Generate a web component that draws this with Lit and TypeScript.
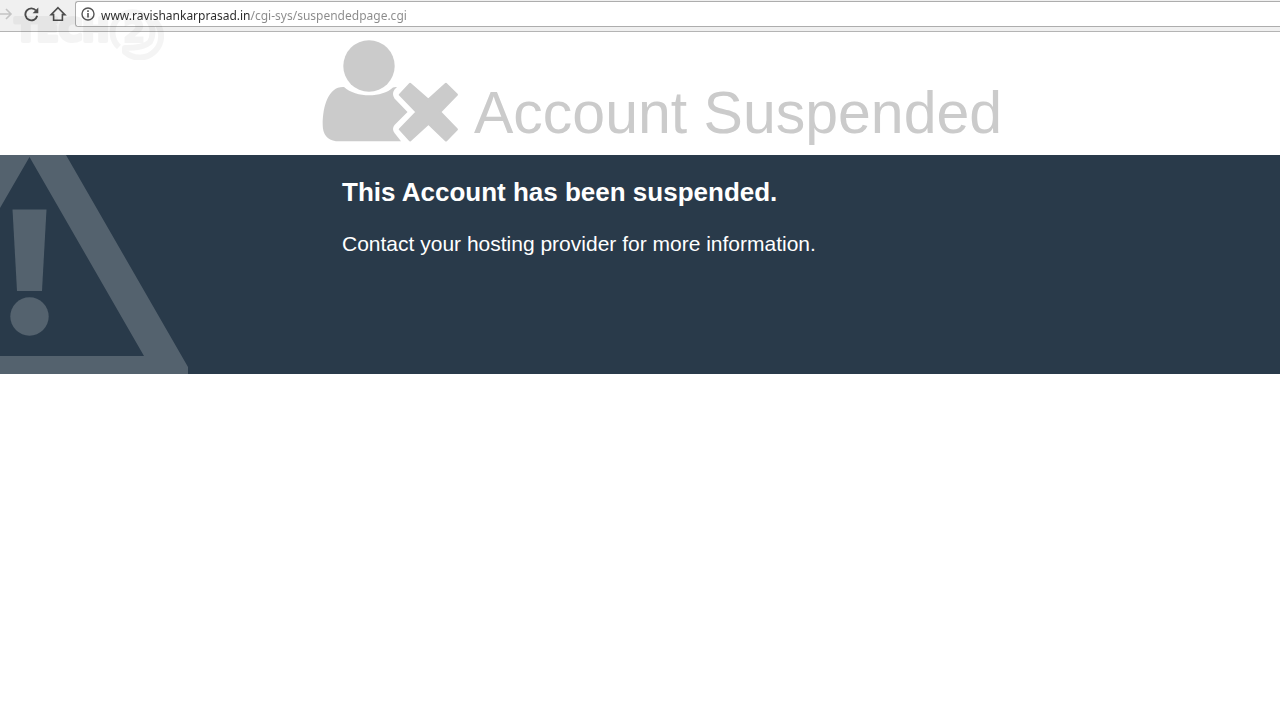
import { LitElement, html, css } from "lit";
import { customElement } from "lit/decorators.js";

@customElement("browser-bar")
class BrowserBar extends LitElement {
  static styles = css`
    :host {
      display: block;
    }
    .bar {
      display: flex;
      align-items: center;
      height: 32px;
      box-sizing: border-box;
      padding: 1px 0 4px;
      background: #f0f0f0;
      border-bottom: 1px solid #b4b4b4;
    }
    button {
      display: flex;
      padding: 0;
      border: 0;
      background: none;
      color: #4c4c4c;
    }
    svg {
      display: block;
    }
    .nav {
      display: flex;
      align-items: center;
      gap: 10px;
      flex: none;
      margin-right: 8px;
    }
    .forward {
      color: #c4c4c4;
      margin-left: -3px;
    }
    .address {
      flex: 1;
      display: flex;
      align-items: center;
      gap: 6px;
      height: 26px;
      box-sizing: border-box;
      padding-left: 5px;
      background: #fff;
      border: 1px solid #adadad;
      border-right: 0;
      border-radius: 3px 0 0 3px;
    }
    .info {
      color: #555;
    }
    input {
      flex: 1;
      min-width: 0;
      height: 22px;
      padding: 2px 0 0;
      box-sizing: border-box;
      border: 0;
      outline: 0;
      color: #2b2b2b;
      font: 12px/20px "Noto Sans", "Open Sans", sans-serif;
      background: linear-gradient(90deg, #2b2b2b 150px, #8a8a8a 150px);
      -webkit-background-clip: text;
      background-clip: text;
      -webkit-text-fill-color: transparent;
    }
  `;

  render() {
    return html`
      <div class="bar">
        <div class="nav">
          <button class="forward" aria-label="Forward">
            <svg width="16" height="16" viewBox="0 0 16 16" fill="none" stroke="currentColor" stroke-width="1.600">
              <path d="M0 8H14M9 3L14 8L9 13" />
            </svg>
          </button>
          <button aria-label="Reload">
            <svg width="16" height="16" viewBox="0 0 16 16">
              <path d="M13 4.500A6 6 0 1 0 14.200 9.800" fill="none" stroke="currentColor" stroke-width="1.900" />
              <path d="M15.300 1.500V7.200H9.600Z" fill="currentColor" />
            </svg>
          </button>
          <button aria-label="Home">
            <svg width="18" height="16" viewBox="0 0 18 16" fill="none" stroke="currentColor" stroke-width="1.600">
              <path d="M9 1.700L15.900 8.600H13.400V14.300H4.600V8.600H2.100Z" />
            </svg>
          </button>
        </div>
        <div class="address">
          <button class="info" aria-label="Site information">
            <svg width="14" height="14" viewBox="0 0 14 14">
              <circle cx="7" cy="7" r="6" fill="none" stroke="currentColor" stroke-width="1.400" />
              <path d="M6.200 6H7.800V10.600H6.200ZM6.200 3.300H7.800V4.900H6.200Z" fill="currentColor" />
            </svg>
          </button>
          <input aria-label="Address" value="www.ravishankarprasad.in/cgi-sys/suspendedpage.cgi" spellcheck="false" />
        </div>
      </div>
    `;
  }
}

@customElement("app-root")
class AppRoot extends LitElement {
  static styles = css`
    :host {
      display: block;
      position: relative;
      min-height: 100vh;
      background: #fff;
      font-family: "Liberation Sans", Arial, sans-serif;
    }
    .watermark {
      position: absolute;
      top: 6px;
      left: 12px;
      pointer-events: none;
      opacity: 0.04;
    }
    .watermark text {
      font: bold 32px "DejaVu Sans", sans-serif;
    }
    header {
      display: flex;
      align-items: flex-end;
      gap: 16px;
      padding: 7px 16px 12px 25%;
      color: #cbcbcb;
    }
    .user {
      flex: none;
      margin-left: 2px;
    }
    h1 {
      margin: 0;
      font-size: 59px;
      line-height: 60px;
      font-weight: 400;
    }
    .panel {
      position: relative;
      overflow: hidden;
      box-sizing: border-box;
      min-height: 219px;
      padding: 20px 16px 20px 25%;
      background: #293a4a;
      color: #fff;
    }
    .warning {
      position: absolute;
      top: 0;
      left: 0;
    }
    .message {
      padding-left: 22px;
    }
    h2 {
      margin: 0 0 20px;
      font-size: 26px;
      line-height: 34px;
    }
    p {
      margin: 0;
      font-size: 21px;
      line-height: 30px;
    }
  `;

  render() {
    return html`
      <browser-bar></browser-bar>
      <header>
        <svg class="user" width="136" height="104" viewBox="0 0 136 104" fill="currentColor" aria-hidden="true">
          <circle cx="47" cy="27" r="25.700" />
          <path d="M22 48C34 59 60 59 71 48.500Q73 47.800 75 48L72.500 50.500Q69.500 55 72.500 59.500L85.500 73L72.500 86Q69.500 90 72.500 94L79 102.300H14Q.7 100 .7 86C.7 66 7 47 22 48Z" />
          <path
            d="M88 45L106.300 61L124 45L134.700 55.700L118 73L134.700 90.300L124 101.300L106.300 84.500L88 101.300L78 90.300L94.700 73L78 55.700Z"
            stroke="currentColor"
            stroke-width="2.400"
            stroke-linejoin="round"
          />
        </svg>
        <h1>Account Suspended</h1>
      </header>
      <section class="panel">
        <svg class="warning" width="188" height="219" viewBox="0 0 188 219" fill="#54626e" aria-hidden="true">
          <path d="M0 0H66L188 212V219H0V201H144L29.500 2L0 53Z" />
          <path d="M12.500 54.500H46.500L42 136H17Z" />
          <circle cx="29.500" cy="161.500" r="19.200" />
        </svg>
        <div class="message">
          <h2>This Account has been suspended.</h2>
          <p>Contact your hosting provider for more information.</p>
        </div>
      </section>
      <svg class="watermark" width="152" height="54" viewBox="0 0 152 54" aria-hidden="true">
        <text x="3" y="35" stroke="#000" stroke-width="4" stroke-linejoin="round">TECH</text>
        <path
          d="M107 41A20 20 0 1 1 138 36Q132 42 113 42V46A21 21 0 0 0 142 14"
          fill="none"
          stroke="#000"
          stroke-width="6"
          stroke-linejoin="round"
        />
        <text x="111" y="36" stroke="#000" stroke-width="2">2</text>
      </svg>
    `;
  }
}
